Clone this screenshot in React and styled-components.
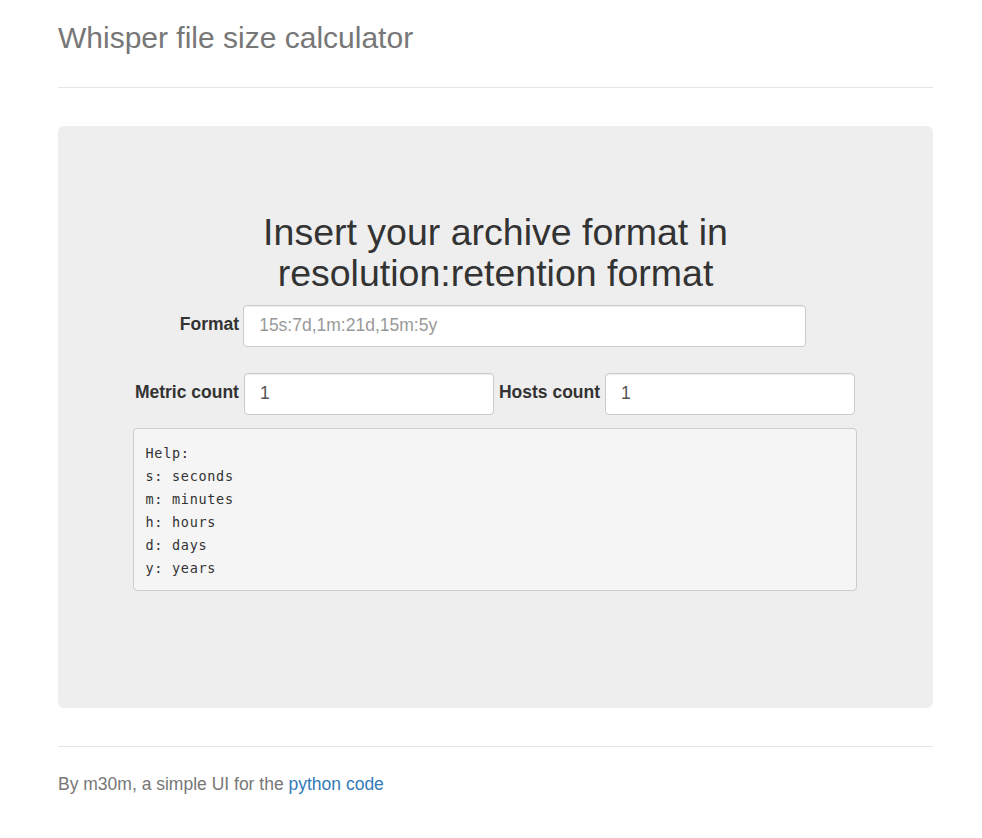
import React, { useState } from "react";
import styled, { createGlobalStyle } from "styled-components";

const GlobalStyle = createGlobalStyle`
  html, body {
    margin: 0;
    padding: 0;
    background: #fff;
  }
  body {
    font-family: "Liberation Sans", Arial, Helvetica, sans-serif;
    font-size: 17.5px;
    line-height: 1.42857;
    color: #333;
  }
  * {
    box-sizing: border-box;
  }
`;

const Page = styled.div`
  width: 875px;
  margin: 0 49px 0 58px;
`;

const Header = styled.header`
  padding: 21px 0 33px;
  border-bottom: 1px solid #e5e5e5;
`;

const Title = styled.h3`
  margin: 0;
  font-size: 30px;
  font-weight: 400;
  line-height: 33px;
  color: #777;
`;

const Jumbotron = styled.main`
  margin-top: 38px;
  height: 582px;
  padding-top: 86px;
  background: #eee;
  border-radius: 6px;
  display: flex;
  flex-direction: column;
  align-items: center;
`;

const Heading = styled.h2`
  margin: 0 0 10.5px;
  font-size: 37.5px;
  font-weight: 400;
  line-height: 41px;
  text-align: center;
  color: #333;
`;

const Row = styled.div`
  display: flex;
  align-items: center;
  justify-content: center;
  gap: ${(p) => p.$gap || 4}px;
  margin-bottom: ${(p) => p.$below}px;
  padding-right: ${(p) => p.$shift || 0}px;
`;

const Group = styled.div`
  display: flex;
  align-items: center;
  gap: 5px;
`;

const Label = styled.label`
  font-weight: 700;
  font-size: 17.5px;
  color: #333;
  padding-bottom: 2px;
`;

const Input = styled.input`
  width: ${(p) => p.$width}px;
  height: 42px;
  padding: 0 15px;
  font-family: "Liberation Sans", Arial, Helvetica, sans-serif;
  font-size: 17.5px;
  color: #555;
  background: #fff;
  border: 1px solid #ccc;
  border-radius: 4px;
  outline: none;
  box-shadow: inset 0 1px 1px rgba(0, 0, 0, 0.075);

  &::placeholder {
    color: #999;
  }
`;

const Help = styled.pre`
  width: 724px;
  height: 163px;
  margin: 0 2px 0 0;
  padding: 13px 12px 10px;
  font-family: "DejaVu Sans Mono", "Liberation Mono", monospace;
  font-size: 13.5px;
  letter-spacing: 0.7px;
  line-height: 23px;
  color: #333;
  background: #f5f5f5;
  border: 1px solid #ccc;
  border-radius: 4px;
`;

const Footer = styled.footer`
  margin-top: 38px;
  padding-top: 24.5px;
  border-top: 1px solid #e5e5e5;
  color: #777;
  line-height: 25px;
`;

const Link = styled.a`
  color: #337ab7;
  text-decoration: none;
`;

const App = () => {
  const [format, setFormat] = useState("");
  const [metrics, setMetrics] = useState("1");
  const [hosts, setHosts] = useState("1");

  return (
    <>
      <GlobalStyle />
      <Page>
        <Header>
          <Title>Whisper file size calculator</Title>
        </Header>
        <Jumbotron>
          <Heading>
            Insert your archive format in
            <br />
            resolution:retention format
          </Heading>
          <Row $below={26} $shift={5}>
            <Label htmlFor="format">Format</Label>
            <Input
              id="format"
              $width={563}
              value={format}
              onChange={(e) => setFormat(e.target.value)}
              placeholder="15s:7d,1m:21d,15m:5y"
            />
          </Row>
          <Row $below={13} $gap={5} $shift={1}>
            <Group>
              <Label htmlFor="metrics">Metric count</Label>
              <Input
                id="metrics"
                $width={250}
                value={metrics}
                onChange={(e) => setMetrics(e.target.value)}
              />
            </Group>
            <Group>
              <Label htmlFor="hosts">Hosts count</Label>
              <Input
                id="hosts"
                $width={250}
                value={hosts}
                onChange={(e) => setHosts(e.target.value)}
              />
            </Group>
          </Row>
          <Help>
            {"Help:\ns: seconds\nm: minutes\nh: hours\nd: days\ny: years"}
          </Help>
        </Jumbotron>
        <Footer>
          By m30m, a simple UI for the <Link href="#">python code</Link>
        </Footer>
      </Page>
    </>
  );
};

export default App;
